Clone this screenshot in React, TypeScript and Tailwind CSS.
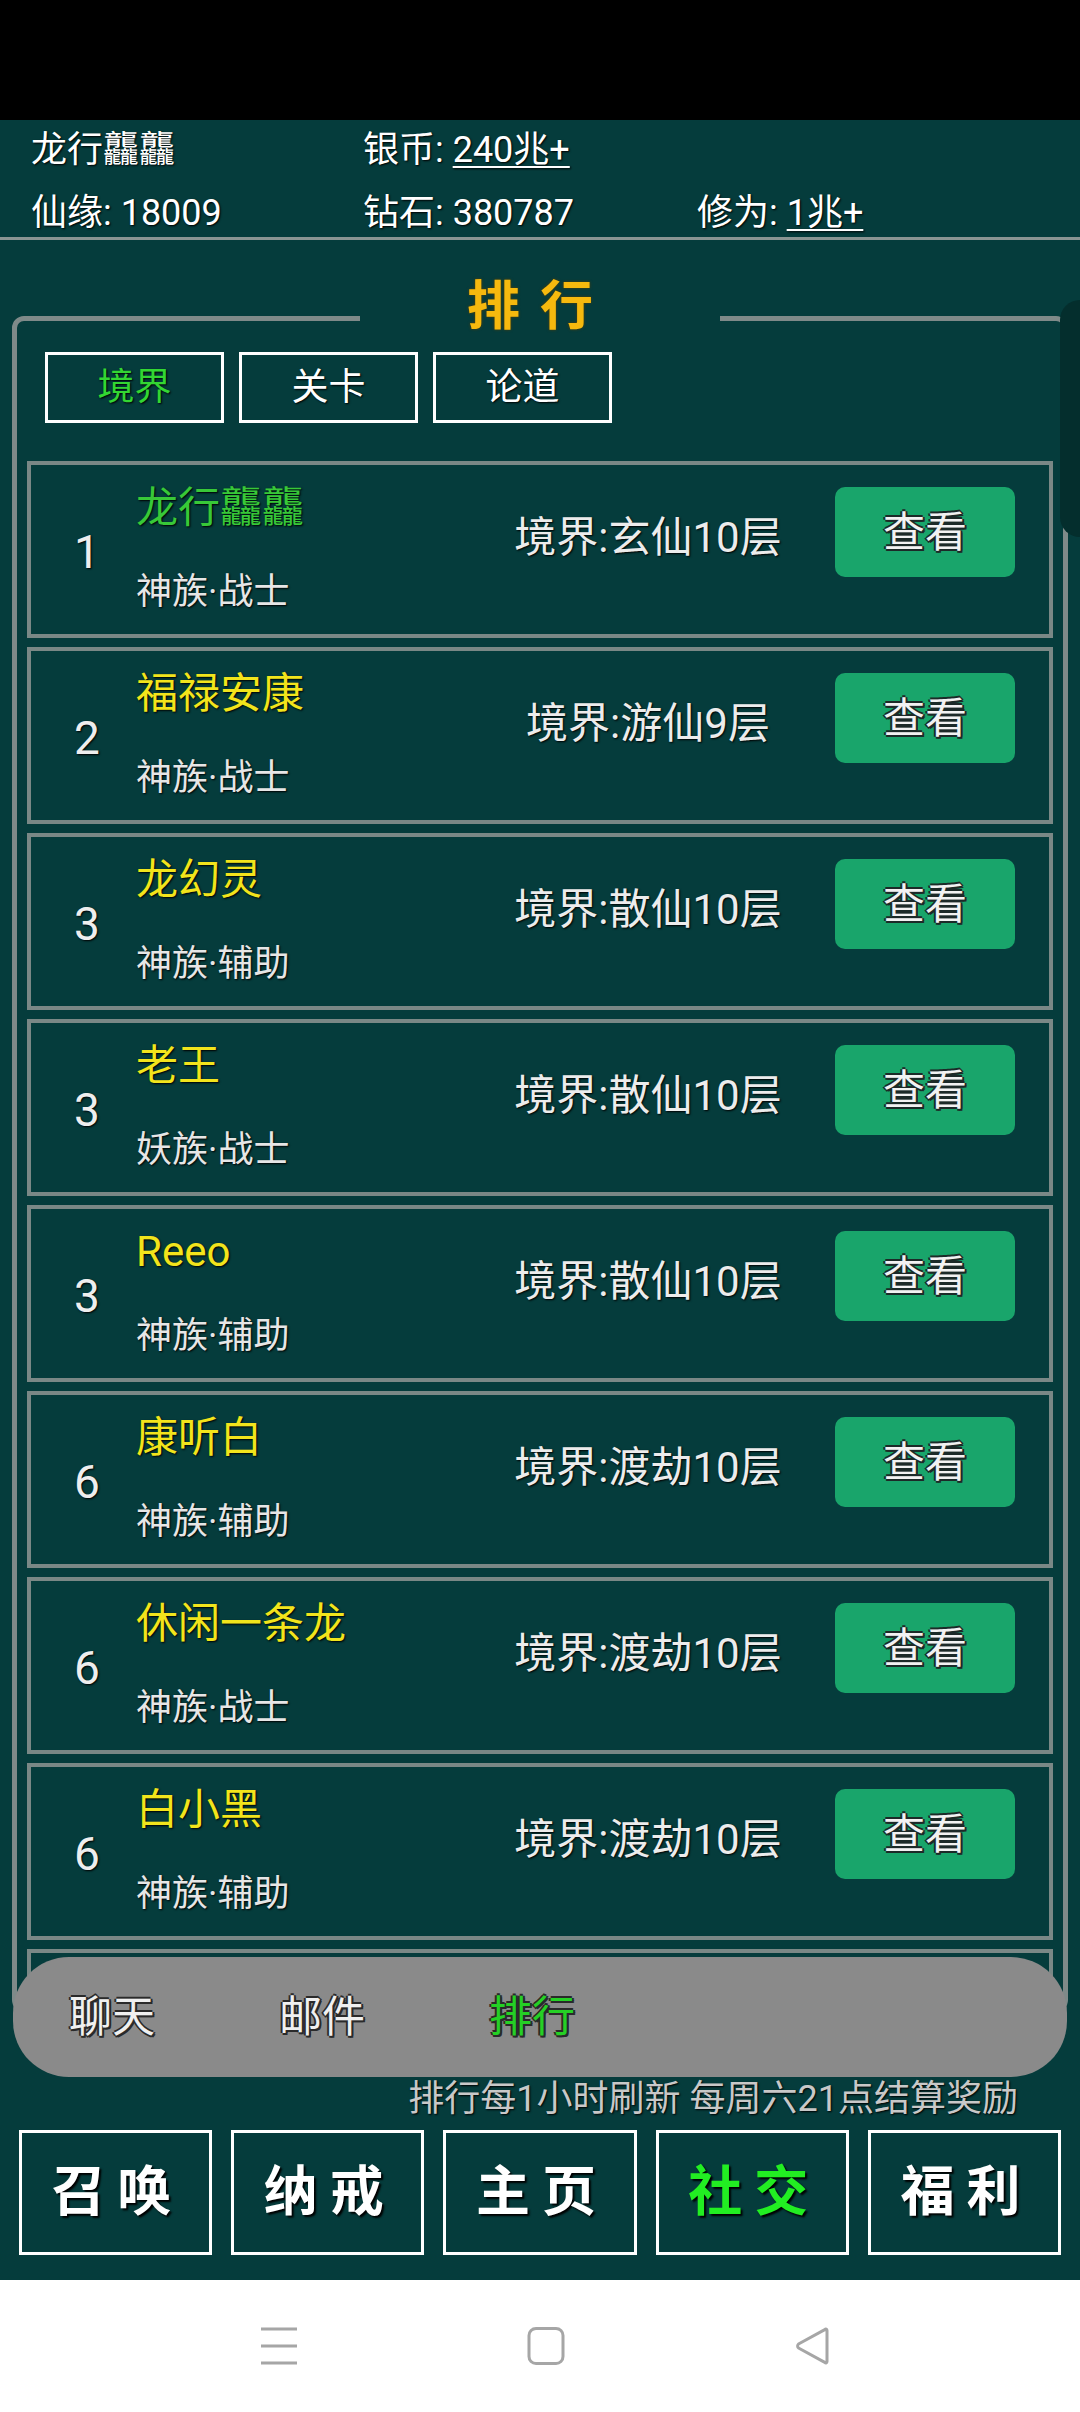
import { Fragment } from 'react';

interface Player {
    rank: number;
    name: string;
    tribe: string;
    realm: string;
    self?: boolean;
}

const players: Player[] = [
    { rank: 1, name: '龙行龘龘', tribe: '神族·战士', realm: '境界:玄仙10层', self: true },
    { rank: 2, name: '福禄安康', tribe: '神族·战士', realm: '境界:游仙9层' },
    { rank: 3, name: '龙幻灵', tribe: '神族·辅助', realm: '境界:散仙10层' },
    { rank: 3, name: '老王', tribe: '妖族·战士', realm: '境界:散仙10层' },
    { rank: 3, name: 'Reeo', tribe: '神族·辅助', realm: '境界:散仙10层' },
    { rank: 6, name: '康听白', tribe: '神族·辅助', realm: '境界:渡劫10层' },
    { rank: 6, name: '休闲一条龙', tribe: '神族·战士', realm: '境界:渡劫10层' },
    { rank: 6, name: '白小黑', tribe: '神族·辅助', realm: '境界:渡劫10层' },
    { rank: 9, name: '', tribe: '', realm: '' },
];

const outline = '[text-shadow:-2px_0_#1c2a28,2px_0_#1c2a28,0_-2px_#1c2a28,0_2px_#1c2a28,2px_2px_#1c2a28]';

function PlayerRow({ p }: { p: Player }) {
    return (
        <div className="flex h-[177px] shrink-0 border-4 border-[#7a8886]">
            <div className="flex w-[105px] items-center pl-[43px] pt-[5px] text-[46px] text-[#eeeeee] [text-shadow:1px_1px_2px_#000]">
                {p.name ? p.rank : ''}
            </div>
            <div className="w-[362px] pt-[19px]">
                <div
                    className={`text-[42px] leading-[48px] [text-shadow:1px_1px_2px_#000] ${
                        p.self ? 'text-[#38c838]' : 'text-[#f2e41c]'
                    }`}
                >
                    {p.name}
                </div>
                <div className="mt-[40px] text-[36px] leading-[40px] text-[#e6e6e6] [text-shadow:1px_1px_2px_#000]">
                    {p.tribe}
                </div>
            </div>
            <div className="mt-[22px] flex h-[90px] w-[300px] items-center justify-center pt-[10px] text-[42px] text-[#ececec] [text-shadow:1px_1px_2px_#000]">
                {p.realm}
            </div>
            {p.name && (
                <button
                    className={`ml-[37px] mt-[22px] flex h-[90px] w-[180px] items-center justify-center rounded-[10px] bg-[#19a56b] text-[42px] text-[#f2f2f2] ${outline}`}
                >
                    查看
                </button>
            )}
        </div>
    );
}

export default function App() {
    return (
        <div
            lang="zh-CN"
            className="relative min-h-[2412px] w-[1080px] bg-white font-[Roboto,'Noto_Sans_CJK_SC',sans-serif]"
        >
            {/* status bar */}
            <div className="h-[120px] bg-black" />

            <div className="bg-[#053c3c] pb-[25px]">
                {/* resources */}
                <div className="border-b-[3px] border-[#8a9593] pb-[4px] pl-[31px] pt-[10px] text-[36px] text-white [text-shadow:1px_1px_2px_#000]">
                    <div className="grid grid-cols-[332px_334px_1fr] leading-[40px]">
                        <span>龙行龘龘</span>
                        <span>
                            银币: <span className="underline decoration-2 underline-offset-4">240兆+</span>
                        </span>
                        <span />
                    </div>
                    <div className="mt-[23px] grid grid-cols-[332px_334px_1fr] leading-[40px]">
                        <span>仙缘: 18009</span>
                        <span>钻石: 380787</span>
                        <span>
                            修为: <span className="underline decoration-2 underline-offset-4">1兆+</span>
                        </span>
                    </div>
                </div>

                {/* ranking panel */}
                <fieldset className="mx-[12px] mt-[53px] rounded-[12px] border-[5px] border-[#7f8a89]">
                    <legend className="mx-auto w-[360px] pb-[23px] text-center text-[53px] font-bold leading-[28px] tracking-[20px] text-[#f6b90e] [text-shadow:0_0_3px_#5a3e00]">
                        排行
                    </legend>
                    <div className="ml-[28px] mt-[8px] flex gap-[15px]">
                        {['境界', '关卡', '论道'].map((t, i) => (
                            <div
                                key={t}
                                className={`flex h-[71px] w-[179px] items-center justify-center border-[3px] border-white text-[37px] [text-shadow:1px_1px_2px_#000] ${
                                    i === 0 ? 'text-[#33d633]' : 'text-white'
                                }`}
                            >
                                {t}
                            </div>
                        ))}
                    </div>
                    <div className="mx-[10px] mt-[38px] flex h-[1546px] flex-col gap-[9px] overflow-hidden">
                        {players.map((p, i) => (
                            <Fragment key={i}>
                                <PlayerRow p={p} />
                            </Fragment>
                        ))}
                    </div>
                </fieldset>

                {/* sub tabs */}
                <div className="relative z-10 mx-[13px] -mt-[55px] flex h-[120px] items-center gap-[124px] rounded-[56px] bg-[#8a8a8a] pl-[56px] text-[43px] [text-shadow:-2px_0_#2a2a2a,2px_0_#2a2a2a,0_-2px_#2a2a2a,0_2px_#2a2a2a,2px_2px_#2a2a2a]">
                    <span className="text-[#f0f0f0]">聊天</span>
                    <span className="text-[#f0f0f0]">邮件</span>
                    <span className="text-[#25d025]">排行</span>
                </div>

                <div className="mt-[2px] flex justify-end pr-[62px]">
                    <span className="text-[36px] leading-[40px] text-[#c8c8c8] [text-shadow:1px_1px_2px_#000]">
                        排行每1小时刷新 每周六21点结算奖励
                    </span>
                </div>

                {/* main nav */}
                <div className="mt-[11px] flex gap-[19px] px-[19px]">
                    {['召唤', '纳戒', '主页', '社交', '福利'].map((t) => (
                        <div
                            key={t}
                            className={`flex h-[125px] flex-1 items-center justify-center border-[3px] border-white pl-[4px] text-[54px] font-bold tracking-[12px] [text-shadow:2px_2px_2px_#000] ${
                                t === '社交' ? 'text-[#22ee22]' : 'text-white'
                            }`}
                        >
                            {t}
                        </div>
                    ))}
                </div>
            </div>

            {/* system navigation */}
            <div className="flex h-[132px] items-center bg-white pl-[145px]">
                <div className="flex w-[267px] justify-center">
                    <svg width="38" height="38" viewBox="0 0 38 38">
                        <path d="M1 2h36M1 19h36M1 36h36" stroke="#a6a6a6" strokeWidth="3" />
                    </svg>
                </div>
                <div className="flex w-[267px] justify-center">
                    <svg width="38" height="38" viewBox="0 0 38 38">
                        <rect x="2" y="1.5" width="34" height="35" rx="7" fill="none" stroke="#a6a6a6" strokeWidth="3" />
                    </svg>
                </div>
                <div className="flex w-[267px] justify-center">
                    <svg width="38" height="38" viewBox="0 0 38 38">
                        <path
                            d="M33 3.5c0-1.5-1.2-1.9-2.2-0.9L4.5 17c-1.2 1.1-1.2 2.9 0 4l26.3 14.4c1 1 2.2 0.6 2.2-0.9z"
                            fill="none"
                            stroke="#a6a6a6"
                            strokeWidth="3"
                            strokeLinejoin="round"
                        />
                    </svg>
                </div>
            </div>

            {/* floating edge handle */}
            <div className="absolute right-0 top-[300px] h-[237px] w-[20px] rounded-l-[20px] bg-[#042e2d]" />
        </div>
    );
}
